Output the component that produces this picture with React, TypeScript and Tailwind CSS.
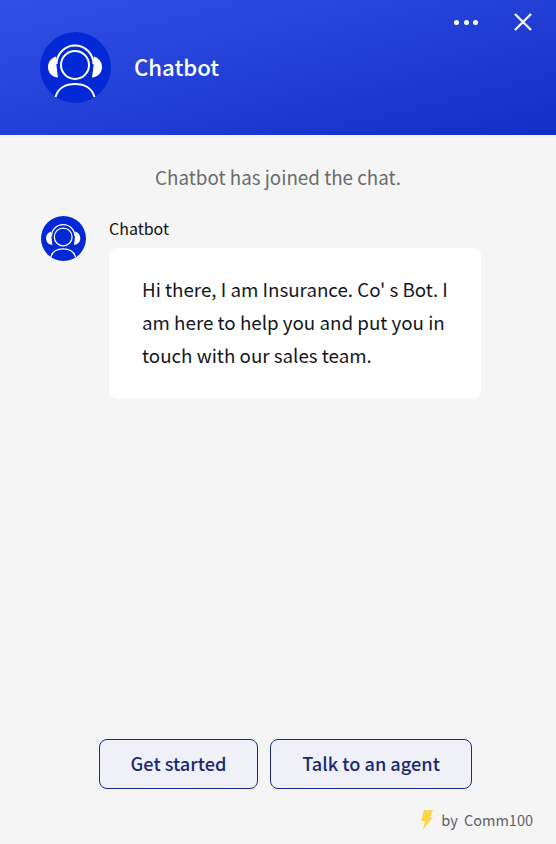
const FONT = "font-['Noto_Sans_CJK_SC','Noto_Sans',sans-serif]"

function AgentAvatar({ className }: { className: string }) {
  return (
    <svg viewBox="0 0 71 71" className={className}>
      <circle cx="35.5" cy="35.5" r="35.5" fill="#0328d6" />
      <circle cx="35" cy="33" r="14" fill="none" stroke="#fff" strokeWidth="2" />
      <path d="M16.500 32 A18.500 18.500 0 0 1 53.500 32" fill="none" stroke="#fff" strokeWidth="2" />
      <path d="M16 24.500 C11 26 8 30 8 35 C8 41 12 45 18 45.500 C17 39 16 31 16 24.500 Z" fill="#fff" />
      <path d="M54 24.500 C59 26 62 30 62 35 C62 41 58 45 52 45.500 C53 39 54 31 54 24.500 Z" fill="#fff" />
      <path d="M15.500 65 C18 56 26 52 35 52 C44 52 52 56 54.500 65" fill="none" stroke="#fff" strokeWidth="2" />
    </svg>
  )
}

function QuickReply({ label, width }: { label: string; width: string }) {
  return (
    <button className={`h-[50px] ${width} rounded-[8px] border border-[#1a2a86] bg-[#f0f1f8] text-[18.2px] font-medium text-[#1a2a6e]`}>
      {label}
    </button>
  )
}

export default function App() {
  return (
    <div className={`flex h-[844px] w-[556px] flex-col bg-[#f5f5f6] ${FONT}`}>
      <header className="relative flex h-[135px] items-center bg-gradient-to-br from-[#3350e6] to-[#122dc6] pl-[40px]">
        <AgentAvatar className="h-[71px] w-[71px]" />
        <span className="mb-[2px] ml-[23px] text-[22.2px] font-medium text-white">Chatbot</span>
        <div className="absolute right-[24px] top-[13px] flex items-center gap-[36px]">
          <div className="flex gap-[4.5px]">
            <span className="h-[5px] w-[5px] rounded-full bg-white" />
            <span className="h-[5px] w-[5px] rounded-full bg-white" />
            <span className="h-[5px] w-[5px] rounded-full bg-white" />
          </div>
          <svg viewBox="0 0 18 18" className="h-[18px] w-[18px]">
            <path d="M1 1 L17 17 M17 1 L1 17" stroke="#fff" strokeWidth="2.200" fill="none" />
          </svg>
        </div>
      </header>

      <main className="flex flex-1 flex-col">
        <p className="mt-[27px] text-center text-[18.8px] leading-[30px] text-[#6b6b6b]">Chatbot has joined the chat.</p>
        <div className="mt-[9px] flex pl-[41px]">
          <AgentAvatar className="mt-[15px] h-[45px] w-[45px]" />
          <div className="ml-[23px]">
            <div className="mt-[15px] text-[16px] leading-[24px] text-[#111]">Chatbot</div>
            <div className="mt-[8px] w-[372px] rounded-[8px] bg-white px-[33px] pb-[28px] pt-[24px] text-[18.75px] leading-[33px] text-[#16161d]">
              Hi there, I am Insurance. Co' s Bot. I am here to help you and put you in touch with our sales team.
            </div>
          </div>
        </div>
      </main>

      <div className="flex gap-[12px] pl-[99px]">
        <QuickReply label="Get started" width="w-[159px]" />
        <QuickReply label="Talk to an agent" width="w-[202px]" />
      </div>

      <footer className="mb-[12px] mt-[19px] flex items-center justify-end pr-[23px] text-[14.5px] leading-[24px] text-[#5f5f68] [word-spacing:3px]">
        <svg viewBox="0 0 14 20" className="mr-[7px] h-[20px] w-[14px]">
          <path d="M4 0 H13 L10 7 H13 L3 20 L5 11 H1 Z" fill="#f9d548" />
        </svg>
        by Comm100
      </footer>
    </div>
  )
}
